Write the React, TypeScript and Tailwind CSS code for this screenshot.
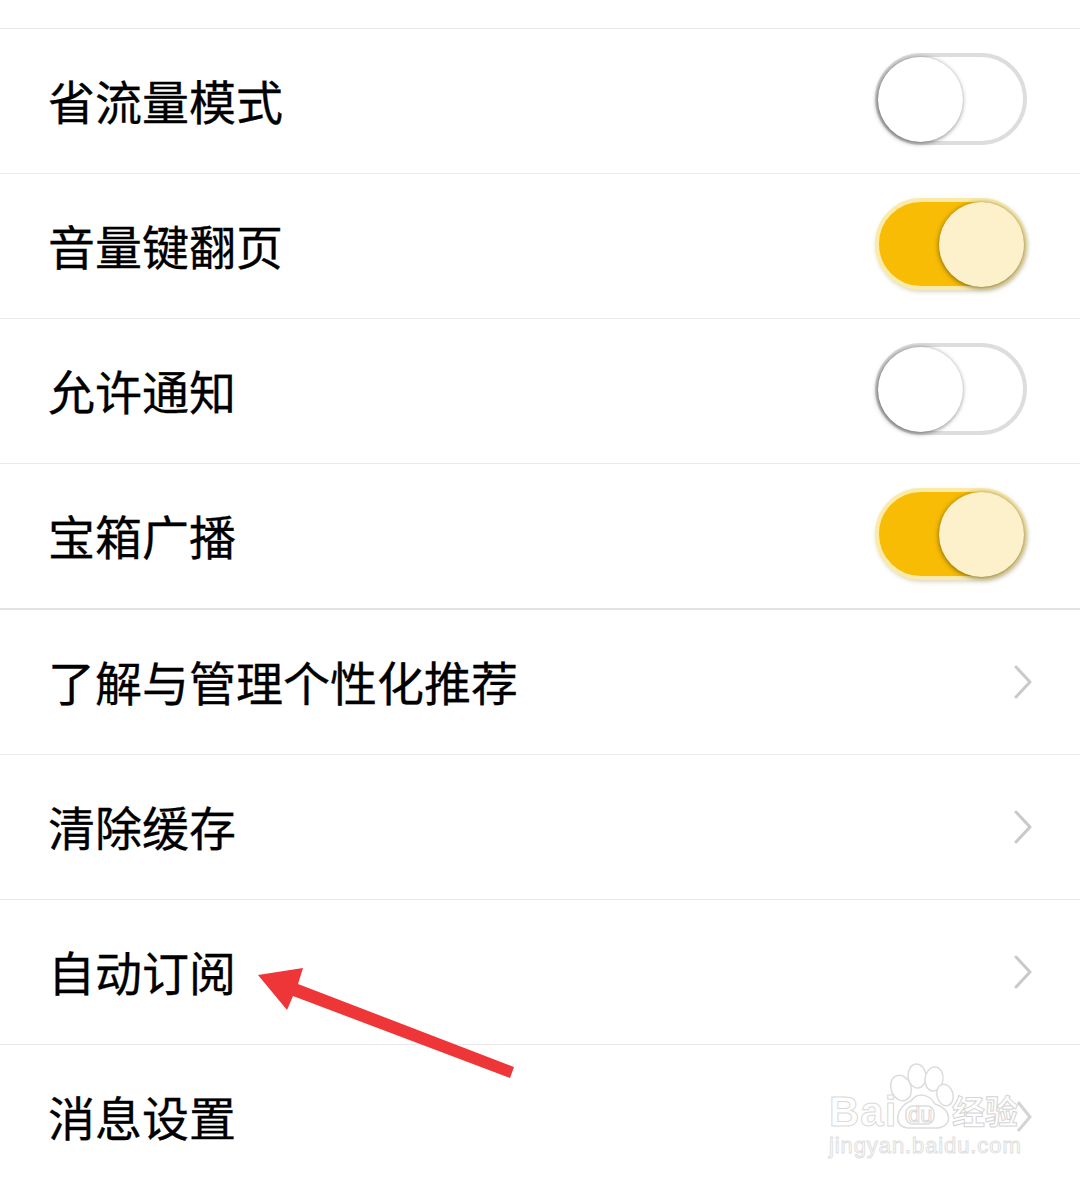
import React from "react";

function Toggle({ on }: { on: boolean }) {
  return on ? (
    <div className="relative h-[92px] w-[152px] rounded-full border-4 border-[#fbeaa8] bg-[#f8bc05] shadow-[1px_2px_4px_rgba(150,140,80,0.35)]">
      <div className="absolute right-[-1px] top-0 h-[85px] w-[85px] rounded-full bg-[#fdf1cb] shadow-[0_1px_5px_rgba(60,50,10,0.7)]" />
    </div>
  ) : (
    <div className="relative h-[92px] w-[152px] rounded-full border-4 border-[#dddddd] bg-white">
      <div className="absolute left-[-1px] top-0 h-[85px] w-[85px] rounded-full bg-white shadow-[-1px_1px_5px_rgba(0,0,0,0.6)]" />
    </div>
  );
}

function Chevron() {
  return (
    <svg width="20" height="36" viewBox="0 0 20 36" fill="none" className="mr-[47px]">
      <path d="M3 3 L17 18 L3 33" stroke="#c9c9c9" strokeWidth="3" strokeLinecap="round" strokeLinejoin="round" />
    </svg>
  );
}

function Row({ label, children, thick }: { label: string; children: React.ReactNode; thick?: boolean }) {
  return (
    <div className={`flex items-center justify-between pl-[48px] ${thick ? "h-[146px] border-b-2 border-[#e2e2e2]" : "h-[145px] border-b border-[#e9e9e9]"}`}>
      <span className="mt-[4px] text-[47px] leading-none text-black [-webkit-text-stroke:0.3px_#000000]">{label}</span>
      {children}
    </div>
  );
}

function Sw({ on }: { on: boolean }) {
  return (
    <div className="mr-[53px] mt-[-4px]">
      <Toggle on={on} />
    </div>
  );
}

export default function App() {
  return (
    <div className="relative h-[1183px] w-[1080px] overflow-hidden bg-white font-['Liberation_Sans','Noto_Sans_CJK_SC',sans-serif]">
      <div className="h-[29px] border-b border-[#e9e9e9]" />
      <Row label="省流量模式"><Sw on={false} /></Row>
      <Row label="音量键翻页"><Sw on /></Row>
      <Row label="允许通知"><Sw on={false} /></Row>
      <Row label="宝箱广播" thick><Sw on /></Row>
      <Row label="了解与管理个性化推荐"><Chevron /></Row>
      <Row label="清除缓存"><Chevron /></Row>
      <Row label="自动订阅"><Chevron /></Row>
      <Row label="消息设置"><span /></Row>

      <svg className="absolute left-0 top-0" width="1080" height="1183" viewBox="0 0 1080 1183" fill="none">
        <polygon points="258,975 303,968 298,984 514,1067 510,1078 293,996 287,1010" fill="#ee3537" />
        <g stroke="#dcdcdc" strokeWidth="1.5" fill="#ffffff">
          <ellipse cx="901" cy="1088" rx="10" ry="13" transform="rotate(-20 901 1088)" />
          <ellipse cx="917" cy="1076" rx="9" ry="12" transform="rotate(-5 917 1076)" />
          <ellipse cx="934" cy="1079" rx="9" ry="12" transform="rotate(8 934 1079)" />
          <ellipse cx="945" cy="1095" rx="8" ry="11" transform="rotate(-15 945 1095)" />
          <path d="M908 1128 C892 1127 896 1106 911 1101 C918 1091 930 1095 935 1104 C954 1110 952 1128 936 1128 Z" />
          <rect x="906" y="1106" width="28" height="18" rx="7" />
          <path d="M1018 1102 L1030 1117 L1018 1131" strokeWidth="3" stroke="#d4d4d4" fill="none" />
        </g>
      </svg>

      <div className="absolute left-[829px] top-[1091px] text-[42px] font-bold leading-none tracking-[1px] text-white [-webkit-text-stroke:1px_#dadada]">
        Bai
      </div>
      <div className="absolute left-[908px] top-[1104px] text-[22px] leading-none text-white [-webkit-text-stroke:1px_#dadada]">
        du
      </div>
      <div className="absolute left-[952px] top-[1096px] text-[33px] font-bold leading-none text-white [-webkit-text-stroke:1px_#d4d4d4]">
        经验
      </div>
      <div className="absolute left-[829px] top-[1135px] text-[22px] leading-none tracking-[0.9px] text-white [-webkit-text-stroke:1px_#e0e0e0]">
        jingyan.baidu.com
      </div>
    </div>
  );
}
